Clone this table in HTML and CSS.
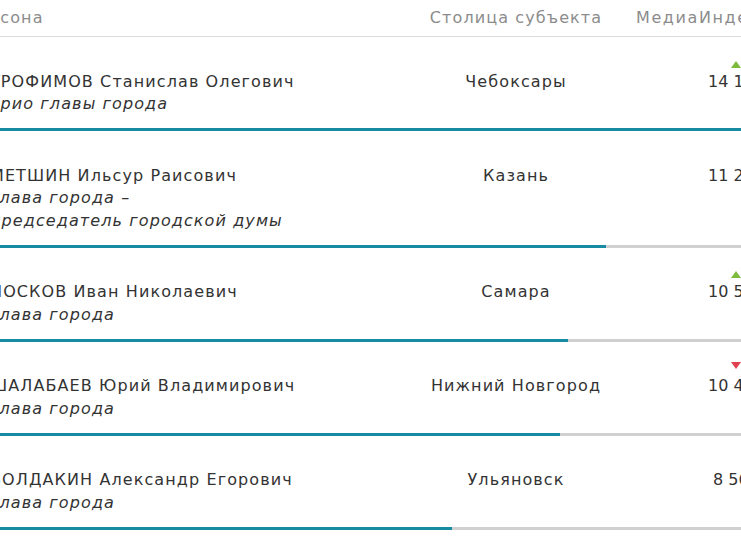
FILE: index.html
```html
<!DOCTYPE html>
<html lang="ru">
<head>
<meta charset="utf-8">
<title>МедиаИндекс</title>
<link rel="stylesheet" href="styles.css">
</head>
<body>
<div class="table">
  <div class="head">
    <div class="h-name">Персона</div>
    <div class="h-city">Столица субъекта</div>
    <div class="h-index">МедиаИндекс</div>
  </div>

  <div class="row">
    <div class="cells">
      <div class="name">ТРОФИМОВ Станислав Олегович<div class="role">врио главы города</div></div>
      <div class="city">Чебоксары</div>
      <div class="index"><span class="num">14 145<span class="up"></span></span></div>
    </div>
    <div class="bar"><div class="fill" style="width:100%"></div></div>
  </div>

  <div class="row">
    <div class="cells">
      <div class="name">МЕТШИН Ильсур Раисович<div class="role">глава города –<br>председатель городской думы</div></div>
      <div class="city">Казань</div>
      <div class="index"><span class="num">11 243</span></div>
    </div>
    <div class="bar"><div class="fill" style="width:79.5%"></div></div>
  </div>

  <div class="row">
    <div class="cells">
      <div class="name">НОСКОВ Иван Николаевич<div class="role">глава города</div></div>
      <div class="city">Самара</div>
      <div class="index"><span class="num">10 512<span class="up"></span></span></div>
    </div>
    <div class="bar"><div class="fill" style="width:74.8%"></div></div>
  </div>

  <div class="row">
    <div class="cells">
      <div class="name">ШАЛАБАЕВ Юрий Владимирович<div class="role">глава города</div></div>
      <div class="city">Нижний Новгород</div>
      <div class="index"><span class="num">10 437<span class="down"></span></span></div>
    </div>
    <div class="bar"><div class="fill" style="width:73.8%"></div></div>
  </div>

  <div class="row">
    <div class="cells">
      <div class="name">БОЛДАКИН Александр Егорович<div class="role">глава города</div></div>
      <div class="city">Ульяновск</div>
      <div class="index"><span class="num">8 560</span></div>
    </div>
    <div class="bar"><div class="fill" style="width:60.5%"></div></div>
  </div>
</div>
</body>
</html>
```
FILE: styles.css
```css
html, body {
  margin: 0;
  padding: 0;
  overflow: hidden;
  background: #ffffff;
}
body {
  font-family: "DejaVu Sans", sans-serif;
  font-size: 16px;
  letter-spacing: 1.1px;
  color: #333333;
}
.table {
  width: 880px;
  margin-left: -38px;
}
.head {
  display: grid;
  grid-template-columns: 440px 228px 212px;
  height: 37px;
  border-bottom: 1px solid #dcdcdc;
  color: #8c8c8c;
  line-height: 22px;
  padding-top: 7px;
  box-sizing: border-box;
  width: 880px;
}
.h-name { padding-left: 3px; white-space: nowrap; }
.h-city { text-align: center; white-space: nowrap; }
.h-index { padding-left: 6px; white-space: nowrap; letter-spacing: 1.6px; }

.row {
  padding-top: 33.5px;
}
.cells {
  display: grid;
  grid-template-columns: 440px 228px 212px;
  line-height: 22.5px;
  padding-bottom: 12.5px;
}
.name {
  padding-left: 28px;
  white-space: nowrap;
}
.role {
  font-style: italic;
}
.city {
  text-align: center;
  white-space: nowrap;
}
.index {
  text-align: center;
  white-space: nowrap;
}
.num {
  position: relative;
  display: inline-block;
  letter-spacing: 0;
}
.up, .down {
  position: absolute;
  left: 50%;
  margin-left: -5px;
  width: 0;
  height: 0;
  border-left: 5px solid transparent;
  border-right: 5px solid transparent;
}
.up { border-bottom: 7px solid #7dbb3c; top: -10px; }
.down { border-top: 7px solid #e04050; top: -13px; }

.bar {
  width: 810px;
  height: 3px;
  background: #d0d0d0;
}
.fill {
  height: 100%;
  background: #178ba2;
}
```
